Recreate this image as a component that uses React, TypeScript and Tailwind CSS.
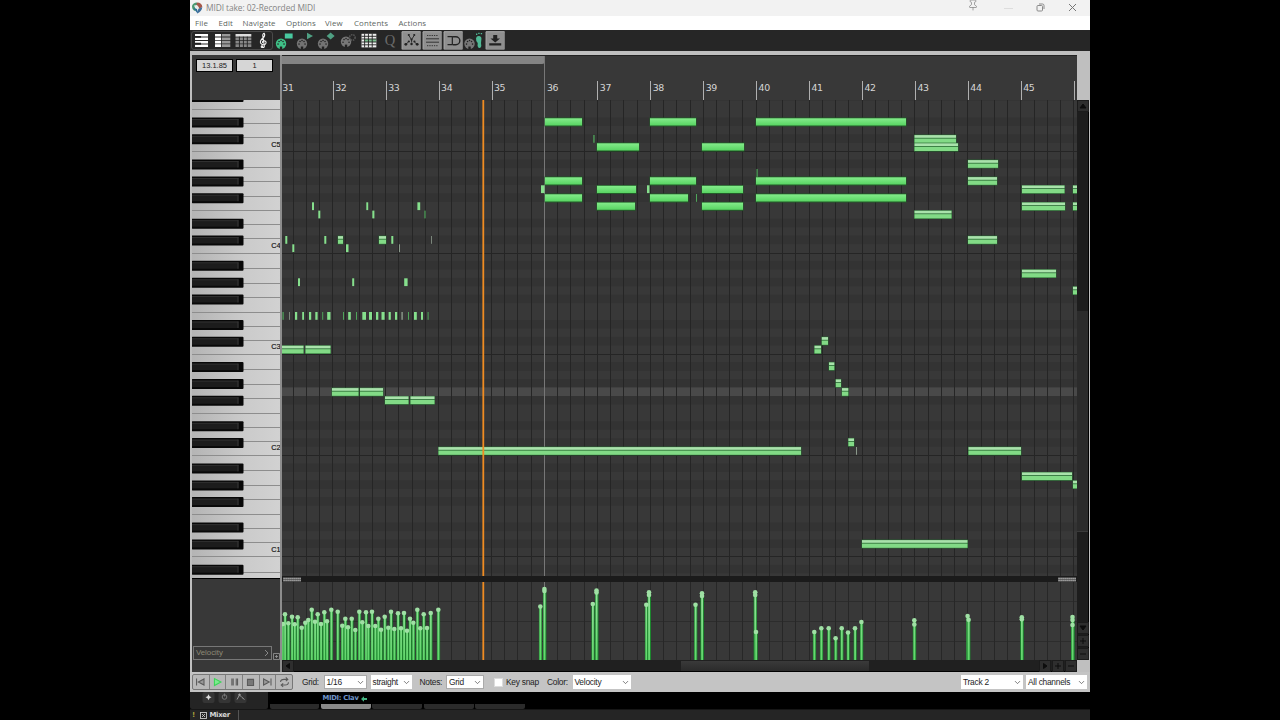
import React from 'react';
import { ChevronDown, Pin } from 'lucide-react';

type NoteKind = 'solid' | 'split' | 'tick' | 'dim' | 'gray';
type Note = [x1: number, x2: number, y: number, kind: NoteKind];

const BAR_WIDTH = 52.93;
const FIRST_BAR_X = 280.3;
const ROW = 8.44;
// bottom edge of every C row, C6 down to C0
const OCTAVES = [50, 151.3, 252.5, 353.8, 455.1, 556.4, 657.7];
const BARS = Array.from({ length: 16 }, (_, i) => 31 + i);
const BEATS = Array.from({ length: 60 }, (_, i) => Math.round(FIRST_BAR_X + (i + 1) * (BAR_WIDTH / 4)) - 0.5);

const NOTES: Note[] = [
  [545, 582, 118, 'solid'], [650, 696, 118, 'solid'], [756, 906, 118, 'solid'],
  [597, 639, 143, 'solid'], [702, 744, 143, 'solid'],
  [545, 582, 177, 'solid'], [650, 696, 177, 'solid'], [756, 906, 177, 'solid'],
  [541, 544.5, 185.3, 'tick'], [597, 636, 185.5, 'solid'], [647, 649.5, 185.3, 'tick'], [702, 743, 185.5, 'solid'],
  [545, 582, 194, 'solid'], [650, 688, 194, 'solid'], [756, 906, 194, 'solid'], [696, 697, 194, 'dim'],
  [597, 635, 202.3, 'solid'], [702, 743, 202.3, 'solid'],
  [593.3, 594.6, 135, 'dim'], [756.5, 757.7, 169, 'dim'],
  [914.5, 956, 135, 'split'], [914.5, 958, 143.2, 'split'],
  [968, 998, 160, 'split'], [968, 997, 177, 'split'],
  [914.5, 951.5, 210.6, 'split'], [968, 997, 236, 'split'],
  [1022, 1064.5, 185.4, 'split'], [1022, 1065, 202.4, 'split'], [1022, 1056, 269.6, 'split'],
  [1073, 1077, 185.4, 'split'], [1073, 1077, 202.4, 'split'], [1073, 1077, 286.6, 'split'],
  [282, 303.5, 345.6, 'split'], [305.5, 330.5, 345.6, 'split'],
  [332, 358.5, 388, 'split'], [360, 383, 388, 'split'],
  [385, 408.5, 396.3, 'split'], [410.5, 434.5, 396.3, 'split'],
  [438.5, 801, 447, 'split'], [968.5, 1021, 447, 'split'],
  [1022, 1072, 472.3, 'split'], [1073, 1077, 480.6, 'split'], [862, 967.5, 540, 'split'],
  [814.5, 821, 345.6, 'split'], [821.8, 828, 337, 'split'], [829, 834.3, 362.3, 'split'],
  [835.8, 841, 379.3, 'split'], [842, 848.3, 388, 'split'], [848.4, 854, 438.3, 'split'],
  [856, 857, 447, 'gray'],
  [285.3, 287.3, 236, 'tick'], [292.3, 294.3, 244.3, 'tick'], [312, 314, 202.3, 'tick'],
  [318.3, 320.3, 210.6, 'tick'], [324.3, 326.3, 236, 'tick'], [338, 343, 236, 'split'],
  [346, 348.5, 244.3, 'tick'], [366.3, 368.2, 202.3, 'tick'], [372.3, 374.4, 210.6, 'tick'],
  [379, 386, 236, 'split'], [391.3, 393.3, 236, 'tick'], [399, 400, 244.3, 'gray'],
  [417.4, 420.2, 202.3, 'tick'], [424.4, 425.6, 210.6, 'dim'], [431.2, 432, 236, 'gray'],
  [298, 300, 278.3, 'tick'], [352.2, 354.2, 278.3, 'tick'], [404.2, 407.6, 278.3, 'tick'],
  [282.5, 283.7, 312, 'dim'], [289, 289.8, 312, 'gray'], [295, 297.2, 312, 'tick'],
  [302.2, 304, 312, 'tick'], [309, 311.2, 312, 'tick'], [315.3, 317.6, 312, 'tick'],
  [322.2, 323.2, 312, 'dim'], [327.2, 330.5, 312, 'tick'], [343, 344, 312, 'dim'],
  [348.2, 350.8, 312, 'tick'], [356, 357, 312, 'dim'], [362.3, 366, 312, 'tick'],
  [369, 372, 312, 'tick'], [376, 378.3, 312, 'tick'], [381.5, 384.6, 312, 'tick'],
  [388.6, 390.8, 312, 'tick'], [395, 397.2, 312, 'tick'], [401.4, 402.8, 312, 'gray'],
  [408, 409, 312, 'dim'], [414, 416.8, 312, 'tick'], [421, 423, 312, 'tick'], [427.6, 428.6, 312, 'dim'],
];

const VELOCITIES: [number, number][] = [
  [283, 624], [285, 614.3], [288.3, 623.3], [292, 616.7], [294.7, 624.3], [297.7, 617.3], [301.7, 627.7],
  [305.3, 622.7], [308.3, 620], [311.7, 609.7], [315, 621.7], [317.7, 614.3], [321, 624], [324.3, 612.3],
  [327, 621.3], [331.3, 609.7], [337.7, 611.7], [342.3, 625.7], [345.3, 618.7], [348, 627.3], [351.7, 618.7],
  [355.3, 630], [359.3, 611.7], [362.3, 622.3], [366, 612.3], [368.3, 626], [372, 611.7], [375.3, 626],
  [378.3, 618.7], [381, 629.7], [384.7, 616.7], [388.3, 627.7], [391, 611.7], [394.3, 629], [398, 613.3],
  [401, 628.3], [404, 613], [407, 630.7], [410, 618.7], [413.3, 622.7], [417.3, 609.7], [420.3, 628.3],
  [423.7, 614.3], [427, 628], [430.7, 613], [438.3, 609.7],
  [540.3, 606.5], [544.4, 589], [544.4, 591], [592.8, 604], [596.5, 590.5], [596.5, 592.5], [646.3, 604.7],
  [649, 592.3], [649, 595], [695.5, 604.7], [702, 593.3], [702, 596], [755.2, 592.3], [755.2, 595], [756, 632],
  [814.3, 632], [821.3, 628.3], [828.7, 628.3], [835.6, 638.3], [841.7, 628.3], [848, 632.5], [855, 628.3],
  [861.4, 622], [914.3, 620.3], [914.3, 624.5], [967.6, 616], [968.6, 619.8], [1021.8, 617.3], [1021.8, 619.3],
  [1072.5, 617], [1072.5, 620], [1072.5, 625],
];

const MENU = [
  { label: 'File', width: 'w-[23.5px]' },
  { label: 'Edit', width: 'w-[24px]' },
  { label: 'Navigate', width: 'w-[43.5px]' },
  { label: 'Options', width: 'w-[39px]' },
  { label: 'View', width: 'w-[29px]' },
  { label: 'Contents', width: 'w-[44.5px]' },
  { label: 'Actions', width: 'w-[40px]' },
];

const TitleBar: React.FC = () => (
  <div className="h-4 bg-[#f2f2f2] flex items-center shrink-0">
    <svg viewBox="0 0 12 12" className="w-3 h-3 ml-[1px]">
      <path d="M1 4 Q2 1 6 .6 L6 6 L4 9 Q1 8 1 4Z" fill="#4a9a72" />
      <path d="M6 .6 Q11 .8 11.3 5 L8 7 L5 4Z" fill="#a5584a" />
      <path d="M11.3 5 Q11 9 6.3 11.6 L5.6 8Z" fill="#3f6f9c" />
      <path d="M3 3.5 L6 3 L8 5.5 L6 10Z" fill="#e8eeec" />
      <path d="M2.2 6 L6.6 11.6 L6 7Z" fill="#2d6e98" />
    </svg>
    <span className="ml-[3px] text-[8.4px] leading-4 text-[#858585] whitespace-nowrap tracking-[-0.01em]">MIDI take: 02-Recorded MIDI</span>
    <div className="ml-auto flex items-center h-4 text-[#8a8a8a]">
      <Pin className="w-[12px] h-[12px] mb-[7px] mr-[25px]" strokeWidth={1.6} />
      <span className="w-[9px] h-px bg-[#dddddd] mr-[23px]" />
      <svg viewBox="0 0 9 9" className="w-[9px] h-[9px] mr-[23px] mb-[2px]" fill="none" stroke="#8a8a8a">
        <rect x="1" y="2.5" width="5.5" height="5.5" rx="1" />
        <path d="M3 1 H6.5 Q8 1 8 2.5 V6" />
      </svg>
      <svg viewBox="0 0 9 9" className="w-[9px] h-[9px] mr-[13px] mb-[2px]" fill="none" stroke="#777">
        <path d="M1 1 L8 8 M8 1 L1 8" />
      </svg>
    </div>
  </div>
);

const Din: React.FC<{ color: string; x?: number; y?: number }> = ({ color, x = 6, y = 13.7 }) => (
  <g>
    <circle cx={x} cy={y} r="5.2" fill={color} />
    {[[-3, 0.4], [-2, -2.2], [0, -3.2], [2, -2.2], [3, 0.4]].map(([dx, dy], i) => (
      <circle key={i} cx={x + dx} cy={y + dy} r=".8" fill="#222" />
    ))}
    <rect x={x - 1.2} y={y + 2.8} width="2.4" height="2.6" fill="#222" />
  </g>
);

const Raised: React.FC = () => (
  <>
    <rect x=".8" y="1.3" width="19" height="18.4" rx="1" fill="#8f8f8f" />
    <path d="M1 19.3 V1.7 H19.5" stroke="#b5b5b5" fill="none" strokeWidth=".7" />
  </>
);

const ICONS: React.ReactNode[] = [
  <g fill="#fff">
    <path d="M4 4h13v2.5H4zM4 7.5h13v2.5H4zM4 11h13v2.5H4zM4 14.5h13V17H4z" />
    <path d="M4 6h6v1.8H4zM4 12.8h6v2H4z" fill="#222" />
  </g>,
  <g>
    <path d="M3 4h6v2.6H3zM3 7.4h6V10H3zM3 10.8h6v2.6H3zM3 14.2h6V17H3z" fill="#fff" />
    <path d="M9.8 4h8.5v2.6H9.8zM9.8 7.4h8.5V10H9.8zM9.8 10.8h8.5v2.6H9.8zM9.8 14.2h8.5V17H9.8z" fill="#999" />
  </g>,
  <g>
    <path d="M2.5 4h15.8v2.6H2.5z" fill="#ddd" />
    <path d="M2.5 7.4h15.8V10H2.5zM2.5 10.8h15.8v2.6H2.5zM2.5 14.2h15.8V17H2.5z" fill="#888" />
    <path d="M6.4 6.6V17M10.4 6.6V17M14.3 6.6V17" stroke="#222" strokeWidth=".9" />
  </g>,
  <g fill="none" stroke="#f2f2f2" strokeWidth="1.1">
    <path d="M8 17 Q10.3 18.5 10.3 16 L8.7 5.5 Q9 3 10.3 3.4 Q11.5 5.5 9 8 Q5.8 10.5 6.5 13 Q8 15.4 11 14.4 Q13.4 12 10.5 10.8 Q7.7 11 8.7 13" />
    <circle cx="8" cy="16.7" r=".8" fill="#f2f2f2" />
  </g>,
  <g><Din color="#3fc087" /><rect x="9.8" y="3.5" width="7.8" height="5" fill="#48c9a0" /></g>,
  <g><Din color="#737373" /><path d="M11 2.8v6.5l6-3.2z" fill="#4fa083" /></g>,
  <g><Din color="#737373" /><path d="M13.6 2.6l4 3.4-4 3.4-4-3.4z" fill="#4fa083" /></g>,
  <g><Din color="#777" x={8} y={11.8} /><circle cx="14.3" cy="7.5" r="2.8" fill="none" stroke="#555" strokeWidth="1.6" strokeDasharray="1.5 .8" /></g>,
  <g>
    <rect x="2.5" y="3.8" width="14.8" height="13.6" fill="#eee" />
    <rect x="5.5" y="9" width="11.5" height="3" fill="#7ec291" />
    <path d="M2.5 6.3h15M2.5 9h15M2.5 12h15M2.5 14.8h15M5.6 3.5v14M9.4 3.5v14M13.2 3.5v14" stroke="#222" strokeWidth=".9" />
  </g>,
  <text x="4.8" y="15.3" fontSize="14.5" fill="#6a6a6a" fontFamily="Liberation Serif, serif">Q</text>,
  <g>
    <Raised />
    <g fill="none" stroke="#222" strokeWidth=".9"><path d="M4.8 14.3L7.2 12.2M8.2 6L10.4 9.6M12.8 6L10.6 9.6V12.5M13.5 12.2L16.2 14.3" /></g>
    <g fill="#222"><circle cx="4.8" cy="14.3" r="1.4" /><circle cx="7.8" cy="11.5" r="1.1" /><circle cx="10.5" cy="9.6" r="1.1" /><circle cx="10.5" cy="14" r="1.2" /><circle cx="13.4" cy="11.5" r="1.1" /><circle cx="16.2" cy="14.3" r="1.4" /><circle cx="13.2" cy="5" r="1.1" /><circle cx="7.8" cy="5" r="1.1" /></g>
  </g>,
  <g>
    <Raised />
    <path d="M5 5.5h11M5 15.7h11" stroke="#333" strokeDasharray="1.3 1" />
    <path d="M4 8.8h13M4 12.2h13" stroke="#333" />
  </g>,
  <g>
    <Raised />
    <path d="M10 14.7h2.8a4 4 0 0 0 0-8H10" fill="none" stroke="#222" strokeWidth="1.4" />
    <path d="M4.5 6.7h4.8v8H4.5" fill="none" stroke="#222" strokeWidth="1.2" />
  </g>,
  <g>
    <Din color="#777" x={5.5} />
    <path d="M12 8.2Q12.4 5.7 15.2 6Q18 6.4 17.3 10Q16.7 13 17.3 16Q16.7 18.5 14.5 17.7Q13 16.5 13.7 13Q11.7 11 12 8.2Z" fill="#4fb995" />
    <path d="M12 4.3h1.3M14.2 3.4h1.4M16.7 3.6h1.4" stroke="#4fb995" strokeWidth="1.4" />
  </g>,
  <g>
    <Raised />
    <path d="M8.2 5h4v3.5h2.8l-4.8 4L5.4 8.5h2.8zM4.2 13.3h12v2.2h-12z" fill="#222" />
  </g>,
];

const ToolBar: React.FC = () => (
  <div className="h-[21px] bg-[#262626] flex items-center shrink-0 pl-[0.5px] relative">
    {ICONS.map((icon, i) => (
      <svg key={i} viewBox="0 0 21 21" className="w-[21.05px] h-[21px] shrink-0">{icon}</svg>
    ))}
    <div className="absolute left-[1px] top-[1px] w-[82px] h-[19px] border border-[#4a4a4a] rounded-[3px]" />
  </div>
);

const Ruler: React.FC = () => (
  <div className="h-[44px] w-[795px] bg-[#383838] overflow-hidden flex flex-col relative">
    <div className="h-[8px] w-[263px] bg-[#848484] rounded-br-[3px] shrink-0" />
    <div className="flex mt-auto h-[19px] ml-[-2.2px]">
      {BARS.map((bar) => (
        <div key={bar} className="w-[52.93px] shrink-0 border-l border-[#b0b0b0] pl-[1.5px] text-[9.4px] leading-[13px] tracking-[-0.04em] text-[#d6d6d6] font-['DejaVu_Sans',sans-serif]">
          {bar < 46 && bar}
        </div>
      ))}
    </div>
    <div className="absolute left-[262px] top-0 w-px h-full bg-[#777]" />
  </div>
);

const Keyboard: React.FC = () => (
  <svg viewBox="191.5 100 88.5 478" className="w-[88.5px] h-[478px] block">
    <defs>
      <linearGradient id="ivory" x1="0" x2="1" y1="0" y2="0">
        <stop offset="0" stopColor="#b4b4b4" />
        <stop offset=".6" stopColor="#cbcbcb" />
        <stop offset="1" stopColor="#d2d2d2" />
      </linearGradient>
    </defs>
    <rect x="191" y="100" width="90" height="478" fill="url(#ivory)" />
    {OCTAVES.map((b) => (
      <g key={b}>
        {[0, 14.2, 28.2, 42.2, 57, 71.3, 86].map((d) => (
          <rect key={d} x={191} y={Math.round(b - d)} width="90" height="1" fill="#8d8d8d" />
        ))}
        {[17, 33.8, 59.3, 76, 93].map((d) => (
          <g key={d}>
            <rect x="191" y={b - d} width="52" height="10" rx="1" fill="#080808" />
            <rect x="191" y={b - d + 1.5} width="47" height="6.5" fill="#1c1c1c" />
            <rect x="191" y={b - d + 1.5} width="47" height="1" fill="#303030" />
            <rect x="237" y={b - d + 1.5} width="1" height="6.5" fill="#383838" />
          </g>
        ))}
      </g>
    ))}
    {[5, 4, 3, 2, 1].map((n, i) => (
      <text key={n} x="270.8" y={146.8 + i * 101.2} fontSize="7.3" fill="#101010" stroke="#101010" strokeWidth=".15" fontFamily="Liberation Sans, sans-serif">C{n}</text>
    ))}
  </svg>
);

const NoteShape: React.FC<{ note: Note }> = ({ note: [x1, x2, y, kind] }) => {
  const w = x2 - x1;
  if (kind === 'solid') {
    return (
      <g>
        <rect x={x1 - 0.5} y={y - 0.5} width={w + 1} height="9" fill="#235c29" />
        <rect x={x1} y={y + 0.3} width={w} height="7.2" fill="url(#vel)" />
      </g>
    );
  }
  if (kind === 'split') {
    return (
      <g>
        <rect x={x1 - 0.4} y={y - 0.4} width={w + 0.8} height="8.8" fill="#2a6b34" />
        <rect x={x1} y={y + 0.1} width={w} height="2.7" fill="#a9e2ab" />
        <rect x={x1} y={y + 3.6} width={w} height="4.2" fill="#82da86" />
      </g>
    );
  }
  const fill = kind === 'tick' ? '#86e08d' : kind === 'dim' ? '#4fa55a' : '#8c9a8c';
  return <rect x={x1} y={y} width={w} height="7.8" fill={fill} />;
};

const PianoRoll: React.FC = () => (
  <svg viewBox="282 100 795 476" className="w-[795px] h-[476px] block">
    <defs>
      <linearGradient id="vel" x1="0" x2="0" y1="0" y2="1">
        <stop offset="0" stopColor="#84ec8b" />
        <stop offset="1" stopColor="#58d462" />
      </linearGradient>
    </defs>
    <rect x="282" y="100" width="795" height="476" fill="#383838" />
    {OCTAVES.map((b) => (
      <g key={b}>
        {[1, 3, 6, 8, 10].map((r) => (
          <rect key={r} x="282" y={b - ROW * (r + 1)} width="795" height={ROW} fill="#333333" />
        ))}
      </g>
    ))}
    <rect x="282" y="387.4" width="795" height="8.6" fill="#494949" />
    {OCTAVES.map((b) => <rect key={b} x="282" y={Math.round(b)} width="795" height="1" fill="#252525" />)}
    {BEATS.map((x) => <path key={x} d={`M${x} 100V576`} stroke="#252525" />)}
    <path d="M544.5 100V576" stroke="#777" />
    {NOTES.map((n, i) => <NoteShape key={i} note={n} />)}
    <path d="M483.3 100V576" stroke="#f08c22" strokeWidth="1.8" />
  </svg>
);

const VelocityLane: React.FC = () => (
  <svg viewBox="282 582 795 78" className="w-[795px] h-[78px] block">
    <defs>
      <linearGradient id="stem" gradientUnits="userSpaceOnUse" x1="0" x2="0" y1="600" y2="660">
        <stop offset="0" stopColor="#8fe096" />
        <stop offset="1" stopColor="#62d56c" />
      </linearGradient>
    </defs>
    <rect x="282" y="582" width="795" height="78" fill="#383838" />
    {[601.5, 621.5, 641.5].map((y) => <path key={y} d={`M282 ${y}H1077`} stroke="#2c2c2c" />)}
    {BEATS.map((x) => <path key={x} d={`M${x} 582V660`} stroke="#272727" />)}
    <path d="M544.5 582V660" stroke="#777" />
    {VELOCITIES.map(([x, y], i) => (
      <g key={i}>
        <rect x={x - 1.4} y={y} width="3.2" height={660 - y} fill="#1d8a2f" />
        <rect x={x - 0.8} y={y} width="1.8" height={660 - y} fill="url(#stem)" />
      </g>
    ))}
    {VELOCITIES.map(([x, y], i) => <circle key={i} cx={x} cy={y} r="2.3" fill="#9fe0a4" />)}
    <path d="M483.3 582V660" stroke="#f08c22" strokeWidth="1.8" />
  </svg>
);

const Grip: React.FC = () => (
  <svg viewBox="0 0 18 5" className="w-[18px] h-[5px]">
    <rect width="18" height="5" fill="#333" />
    <path d="M.5 1.5H18M.5 3.5H18" stroke="#ddd" strokeDasharray="1.1 .9" strokeWidth="1.4" />
  </svg>
);

const ScrollButton: React.FC<{ d: string }> = ({ d }) => (
  <svg viewBox="0 0 12 12" className="w-3 h-3 shrink-0">
    <rect x=".5" y=".5" width="11" height="11" fill="#2e2e2e" stroke="#1b1b1b" />
    <path d={d} fill="#0d0d0d" stroke="#0d0d0d" />
  </svg>
);

const Select: React.FC<{ value: string; className: string }> = ({ value, className }) => (
  <div className={`h-[14px] bg-white flex items-center pl-[2px] pr-[1px] justify-between ${className}`}>
    <span>{value}</span>
    <ChevronDown className="w-[9px] h-[9px] text-[#555] shrink-0" strokeWidth={2} />
  </div>
);

const TRANSPORT = [
  <path d="M4 4v8M12.5 4.5v7L6 8z" fill="#999" />,
  <path d="M5 4v8l7.5-4z" stroke="#3ed45a" fill="#7deb8e" />,
  <path d="M5.5 4v8M7 4v8M10.5 4v8M12 4v8" />,
  <path d="M5 5h7v7H5z" fill="#777" />,
  <path d="M12.5 4v8M4 4.5v7L10.5 8z" fill="#999" />,
  <path d="M4 8Q4 5 8 5H12M10 2.8L12.3 5L10 7M13 8.3Q13 11.5 9 11.5H5M7 9.5L4.7 11.5L7 13.5" />,
];

const BottomBar: React.FC = () => (
  <div className="h-[20px] bg-[#c4c4c4] flex items-center shrink-0 text-[8.4px] tracking-[-0.03em] leading-none text-[#1e1e1e] whitespace-nowrap font-['Liberation_Sans',sans-serif] pl-[2px] pr-[3px]">
    <div className="flex h-[16px] border border-[#777] rounded-[2px] overflow-hidden w-[101px] bg-[#b8b8b8]">
      {TRANSPORT.map((icon, i) => (
        <div key={i} className="flex-1 border-r border-[#808080] last:border-r-0 flex items-center justify-center">
          <svg viewBox="0 0 17 16" className="w-[15px] h-[14px]" fill="none" stroke="#5a5a5a" strokeWidth="1.2">{icon}</svg>
        </div>
      ))}
    </div>
    <span className="ml-[9px] w-[21.5px]">Grid:</span>
    <Select value="1/16" className="w-[43px] border border-[#aaa]" />
    <Select value="straight" className="w-[41px] ml-[4px]" />
    <span className="ml-[8px] w-[26.5px]">Notes:</span>
    <Select value="Grid" className="w-[38px] border border-[#aaa]" />
    <span className="w-[9px] h-[9px] bg-white border border-[#ddd] ml-[10px]" />
    <span className="ml-[3px] w-[41px]">Key snap</span>
    <span className="w-[25.5px]">Color:</span>
    <Select value="Velocity" className="w-[58px]" />
    <Select value="Track 2" className="w-[62px] ml-auto" />
    <Select value="All channels" className="w-[61px] ml-[3px]" />
  </div>
);

const Docker: React.FC = () => (
  <div className="h-7 bg-black shrink-0 flex flex-col">
    <div className="h-[17px] flex">
      <div className="w-[78px] bg-[#242424] rounded-b-[2px]">
        <svg viewBox="0 0 78 17" className="w-[78px] h-[17px]" fill="none" stroke="#9a9a9a">
          <g fill="#353535" stroke="none">
            <rect x="12.5" y="0" width="12" height="11" rx="2" />
            <rect x="28.5" y="0" width="12" height="11" rx="2" />
            <rect x="44.5" y="0" width="12" height="11" rx="2" />
          </g>
          <path d="M18.5 2.2l1 2 2 1-2 1-1 2-1-2-2-1 2-1z" fill="#ddd" stroke="none" />
          <circle cx="34.5" cy="5" r="2.3" stroke="#777" />
          <path d="M34.5 1.5v3" stroke="#777" />
          <path d="M47 7.5L49.5 3L52 5.5L54.5 7.5" />
          <circle cx="49.5" cy="2.8" r=".8" fill="#aaa" />
        </svg>
      </div>
      {[0, 1, 2, 3, 4].map((i) => (
        <div key={i} className="w-[51.4px] flex flex-col justify-between pl-[1.5px]">
          <div className="h-3 pt-[1px] pl-[1.5px] flex items-center text-[6.8px] leading-none font-bold text-[#6f95c9] whitespace-nowrap font-['DejaVu_Sans',sans-serif] tracking-[-0.04em]">
            {i === 1 && (
              <>
                MIDI: Clav
                <svg viewBox="0 0 6 6" className="w-[6px] h-[6px] ml-[2px]"><path d="M0 3L3 .3V2H6V4H3V5.7Z" fill="#45b583" /></svg>
              </>
            )}
          </div>
          <div className={`h-[5px] rounded-b-[2px] ${i === 1 ? 'bg-[#888888]' : 'bg-[#2b2b2b]'}`} />
        </div>
      ))}
    </div>
    <div className="h-[11px] bg-[#252525] border-t border-[#161616] flex items-center text-[7px] leading-none font-bold text-[#d8d8d8] font-['DejaVu_Sans',sans-serif]">
      <span className="w-[10px] pl-[2px] text-[#a8a23a]">!</span>
      <svg viewBox="0 0 7 7" className="w-[7px] h-[7px]" fill="none" stroke="#ccc" strokeWidth=".9">
        <rect x=".5" y=".5" width="6" height="6" />
        <path d="M2 2L5 5M5 2L2 5" />
      </svg>
      <span className="ml-[2.5px] w-[29px] h-[10px] leading-[10px] border-r border-[#555] tracking-[-0.05em]">Mixer</span>
    </div>
  </div>
);

const App: React.FC = () => (
  <div className="w-[1280px] h-[720px] bg-black flex justify-center overflow-hidden font-['Open_Sans',sans-serif]">
    <div className="w-[900px] h-[720px] flex flex-col">
      <TitleBar />
      <div className="h-[14px] bg-white flex items-center shrink-0 pl-[5px] text-[7.9px] leading-none text-[#5d665f]">
        {MENU.map((m) => <span key={m.label} className={`${m.width} tracking-[0.015em] pt-[1px]`}>{m.label}</span>)}
      </div>
      <ToolBar />

      {/* Editor area */}
      <div className="h-[621px] bg-[#bfbfbf] pt-[4px] pl-[1.5px] flex shrink-0">
        <div className="w-[90.5px] h-[617px] flex flex-col border-r-2 border-[#8d8d8d] bg-[#383838]">
          <div className="h-[45px] shrink-0 pt-[4px] pl-[4.5px] flex gap-[3px] items-start text-[7.5px] leading-[11px] text-center text-[#1c1c1c] font-['Liberation_Sans',sans-serif]">
            <span className="w-[37px] h-[13px] bg-[#d6d6d6] border border-black">13.1.85</span>
            <span className="w-[37px] h-[13px] bg-[#d6d6d6] border border-black">1</span>
          </div>
          <Keyboard />
          <div className="flex-1 border-t border-black flex items-end pb-[12px] pl-[1.5px]">
            <div className="w-[79px] h-[14px] border border-[#777] flex items-center justify-between px-[2px] text-[7.8px] text-[#8e8a76] font-['Liberation_Sans',sans-serif]">
              <span>Velocity</span>
              <svg viewBox="0 0 5 8" className="w-[5px] h-[8px]" fill="none" stroke="#888"><path d="M1 1L4 4L1 7" /></svg>
            </div>
            <svg viewBox="0 0 7 7" className="w-[7px] h-[7px] ml-[1px]" fill="none" stroke="#999" strokeWidth=".8"><path d="M.5 .5h6v6h-6zM2 3.5h3M3.5 2v3" /></svg>
          </div>
        </div>

        <div className="w-[795px] flex flex-col">
          <div className="h-px bg-[#222]" />
          <Ruler />
          <PianoRoll />
          <div className="h-[6px] bg-[#1b1b1b] flex items-center justify-between px-[1px]">
            <Grip />
            <Grip />
          </div>
          <VelocityLane />
          <div className="h-[12px] bg-[#202020] border-b border-black flex items-center">
            <ScrollButton d="M7.5 3.5L4 6L7.5 8.5Z" />
            <div className="w-[188px] h-[10px] ml-[387px] bg-gradient-to-b from-[#3a3a3a] to-[#2b2b2b]" />
            <div className="ml-auto flex gap-[1px]">
              <ScrollButton d="M4.5 3.5L8 6L4.5 8.5Z" />
              <ScrollButton d="M3 6H9M6 3V9" />
              <ScrollButton d="M3 6H9" />
            </div>
          </div>
        </div>

        <div className="w-[12px] pt-[45px] flex flex-col">
          <div className="h-[560px] bg-[#1d1d1d] flex flex-col border-r border-black">
            <ScrollButton d="M3 8L6 4L9 8Z" />
            <div className="h-[199px]" />
            <div className="h-[221px] bg-[#2b2b2b] border-b border-[#3a3a3a]" />
            <div className="mt-auto flex flex-col gap-[1px]">
              <ScrollButton d="M3 4L6 8L9 4Z" />
              <ScrollButton d="M3 6H9M6 3V9" />
              <ScrollButton d="M3 6H9" />
            </div>
          </div>
        </div>
      </div>

      <BottomBar />
      <Docker />
    </div>
  </div>
);

export default App;
